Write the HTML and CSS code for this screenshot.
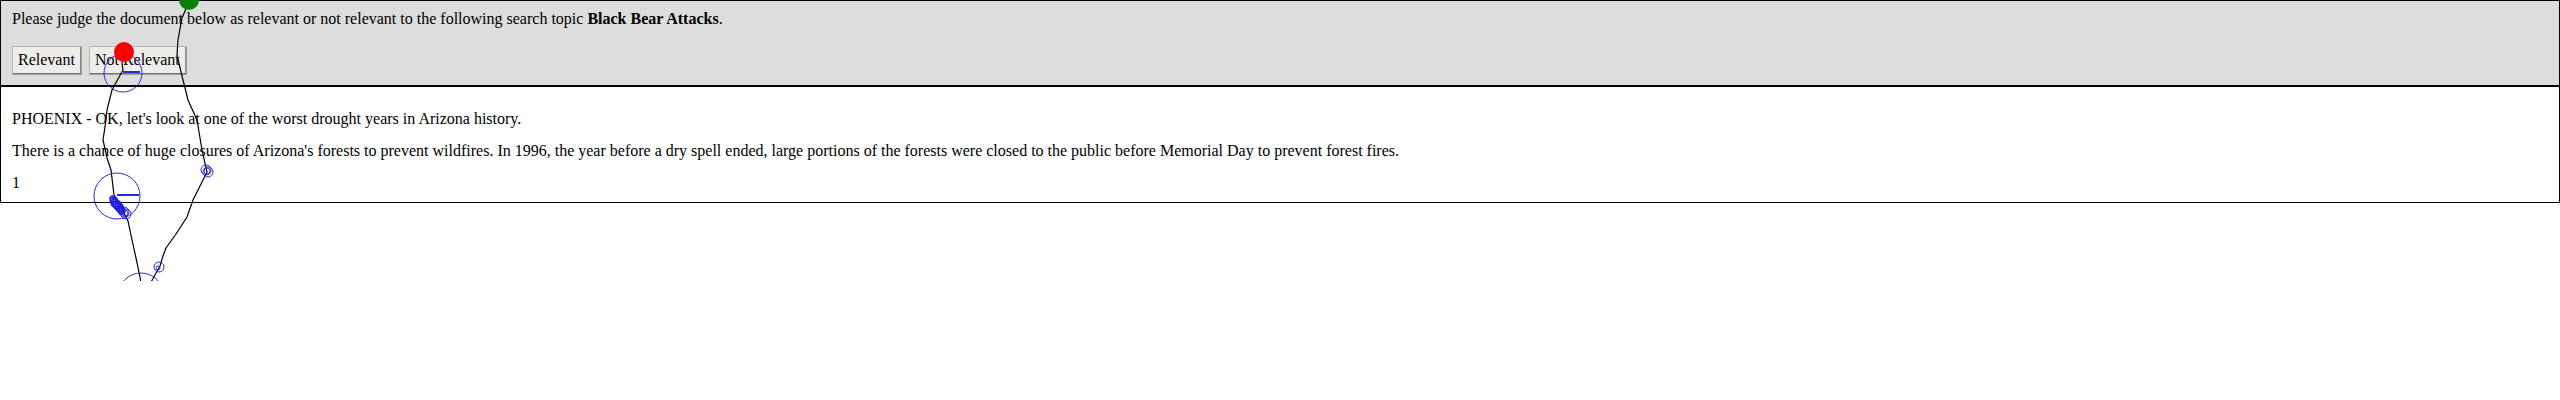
FILE: index.html
```html
<!DOCTYPE html>
<html>
<head>
<meta charset="utf-8">
<title>Relevance judgement</title>
<link rel="stylesheet" href="styles.css">
</head>
<body>
<div class="task">
  <div class="header">
    <div class="prompt">Please judge the document below as relevant or not relevant to the following search topic <b>Black Bear Attacks</b>.</div>
    <div class="actions">
      <button class="btn">Relevant</button>
      <button class="btn">Not Relevant</button>
    </div>
  </div>
  <div class="doc">
    <p>PHOENIX - OK, let's look at one of the worst drought years in Arizona history.</p>
    <p>There is a chance of huge closures of Arizona's forests to prevent wildfires. In 1996, the year before a dry spell ended, large portions of the forests were closed to the public before Memorial Day to prevent forest fires.</p>
    <p>1</p>
  </div>
</div>
<svg class="trace" width="2560" height="281" viewBox="0 0 2560 281">
  <g fill="none" stroke="#000" stroke-width="1.2">
    <path d="M124 52 L122 63 L123 70 L118 79 L112 90 L107 110 L105 127 L103 140 L107 158 L111 170 L114 195 L118 204 L124 213 L128 221 L132 240 L136 258 L140 277 L142 290"/>
    <path d="M188 4 L182 18 L178 40 L177 55 L182 76 L188 100 L197 120 L202 150 L206 168 L207 172 L201 184 L193 200 L187 217 L176 234 L166 248 L163 256 L160 266 L156 273 L150 284"/>
  </g>
  <g fill="none" stroke="#2a2ad4" stroke-width="1">
    <circle cx="123" cy="73" r="19"/>
    <circle cx="117" cy="196" r="23"/>
    <circle cx="141" cy="296" r="23"/>
    <circle cx="206" cy="170" r="5"/>
    <circle cx="208" cy="172" r="5"/>
    <circle cx="207" cy="171" r="3"/>
    <circle cx="124" cy="212" r="5"/>
    <circle cx="126" cy="214" r="5"/>
    <circle cx="125" cy="213" r="3"/>
    <circle cx="159" cy="267" r="5"/>
    <circle cx="158" cy="268" r="2"/>
  </g>
  <g stroke="#2a2ad4" stroke-width="2">
    <line x1="123" y1="72" x2="140" y2="72"/>
    <line x1="117" y1="195" x2="139" y2="195"/>
  </g>
  <g fill="none" stroke="#1f1fe0" stroke-width="1.5">
    <circle cx="113" cy="199" r="3"/>
    <circle cx="114" cy="201" r="3.5"/>
    <circle cx="115" cy="203" r="4"/>
    <circle cx="116" cy="204" r="3"/>
    <circle cx="117" cy="205" r="4"/>
    <circle cx="118" cy="206" r="3"/>
    <circle cx="119" cy="207" r="4"/>
    <circle cx="120" cy="209" r="3"/>
    <circle cx="121" cy="210" r="3.5"/>
    <circle cx="122" cy="211" r="3"/>
    <circle cx="115" cy="200" r="2"/>
    <circle cx="118" cy="203" r="2"/>
    <circle cx="120" cy="206" r="2"/>
  </g>
  <circle cx="124" cy="52" r="10" fill="#ff0000"/>
  <circle cx="189" cy="0" r="10" fill="#0a800a"/>
</svg>
</body>
</html>
```

FILE: styles.css
```css
html, body {
  margin: 0;
  padding: 0;
  background: #fff;
}

body {
  font-family: "Liberation Serif", "Times New Roman", Times, serif;
  font-size: 16px;
  line-height: 18px;
  color: #000;
}

.task {
  width: 100%;
  box-sizing: border-box;
}

.header {
  background: #dddddd;
  border: 1px solid #000;
  padding: 9px 11px 11px;
}

.actions {
  display: flex;
  gap: 8px;
  margin-top: 18px;
}

.btn {
  font-family: "Liberation Serif", "Times New Roman", Times, serif;
  font-size: 16px;
  line-height: 18px;
  color: #000;
  background: #efedea;
  border: 1px solid #b5b5b5;
  border-right-color: #8a8a8a;
  border-bottom-color: #7a7a7a;
  box-shadow: 1px 1px 0 #9a9a9a;
  padding: 4px 5px;
  margin: 0;
  border-radius: 0;
}

.doc {
  border: 1px solid #000;
  border-top: 1px solid #000;
  padding: 23px 11px 10px;
}

.doc p {
  margin: 0 0 14px;
}

.doc p:last-child {
  margin-bottom: 0;
}

.trace {
  position: absolute;
  top: 0;
  left: 0;
  pointer-events: none;
  overflow: hidden;
}
```
